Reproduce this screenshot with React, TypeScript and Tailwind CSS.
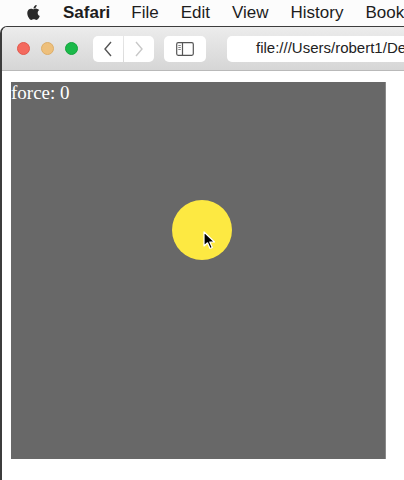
import { FaApple } from "react-icons/fa";

const menuItems = ["File", "Edit", "View", "History", "Bookmarks"];

const Light = ({ color, ring }: { color: string; ring: string }) => (
    <div className={`size-[13px] shrink-0 rounded-full border ${color} ${ring}`} />
);

const Cursor = () => (
    <svg width="13" height="20" viewBox="0 0 13 20" className="absolute left-[192px] top-[149px]">
        <path d="M1 1 L1 15 L4.5 11.8 L7 17.5 L9.3 16.5 L6.8 11 L11.5 11 Z" fill="#000" stroke="#fff" strokeWidth="1.2" strokeLinejoin="round" />
    </svg>
);

export default function App() {
    return (
        <div className="w-[404px] h-[480px] bg-white overflow-hidden flex flex-col font-['Liberation_Sans',Arial,sans-serif]">
            {/* menu bar */}
            <div className="h-[26px] shrink-0 flex items-center pl-[25px] text-[17px] text-[#1d1d1d] whitespace-nowrap bg-[#fcfcfc] overflow-hidden">
                <FaApple className="size-[17px] shrink-0 text-[#2a2a2a] -mt-[2px]" />
                <span className="ml-[21px] shrink-0 font-bold">Safari</span>
                <div className="flex shrink-0 gap-[22px] ml-[21px]">
                    {menuItems.map((m) => (
                        <span key={m} className="shrink-0">{m}</span>
                    ))}
                </div>
            </div>

            {/* window */}
            <div className="flex-1 flex flex-col border-l-2 border-t border-[#3c3c3c] rounded-tl-[7px] overflow-hidden">
                <div className="h-[44px] shrink-0 flex items-center bg-gradient-to-b from-[#ececec] to-[#d6d6d6] border-b border-[#b9b9b9] whitespace-nowrap overflow-hidden">
                    <div className="flex shrink-0 items-center gap-[11px] ml-[15px]">
                        <Light color="bg-[#f46a5e]" ring="border-[#e2584c]" />
                        <Light color="bg-[#eec07c]" ring="border-[#ddae69]" />
                        <Light color="bg-[#1bb94a]" ring="border-[#14a53d]" />
                    </div>
                    <div className="flex shrink-0 gap-px ml-[15px]">
                        <div className="w-[30px] h-[26px] rounded-l-[5px] bg-white flex items-center justify-center">
                            <svg width="10" height="16" viewBox="0 0 10 16">
                                <path d="M8 1 L2 8 L8 15" fill="none" stroke="#555" strokeWidth="1.4" />
                            </svg>
                        </div>
                        <div className="w-[30px] h-[26px] rounded-r-[5px] bg-white flex items-center justify-center">
                            <svg width="10" height="16" viewBox="0 0 10 16">
                                <path d="M2 1 L8 8 L2 15" fill="none" stroke="#c8c8c8" strokeWidth="1.4" />
                            </svg>
                        </div>
                    </div>
                    <div className="ml-[10px] shrink-0 w-[42px] h-[26px] rounded-[5px] bg-white flex items-center justify-center">
                        <svg width="18" height="14" viewBox="0 0 18 14">
                            <rect x="0.7" y="0.7" width="16.6" height="12.6" rx="1.5" fill="none" stroke="#555" strokeWidth="1.2" />
                            <line x1="6.5" y1="1" x2="6.5" y2="13" stroke="#555" strokeWidth="1.2" />
                            <line x1="2.3" y1="3.5" x2="4.8" y2="3.5" stroke="#777" strokeWidth="0.9" />
                            <line x1="2.3" y1="5.5" x2="4.8" y2="5.5" stroke="#777" strokeWidth="0.9" />
                            <line x1="2.3" y1="7.5" x2="4.8" y2="7.5" stroke="#777" strokeWidth="0.9" />
                        </svg>
                    </div>
                    <div className="ml-[21px] w-[220px] shrink-0 h-[26px] rounded-l-[5px] bg-white flex items-center pl-[29px] text-[15px] text-[#222]">
                        file:///Users/robert1/Desktop
                    </div>
                </div>

                {/* page */}
                <div className="flex-1 bg-white pl-[9px] pt-[11px]">
                    <div className="relative w-[375px] h-[377px] bg-[#686868] border-r border-[#8a8a8a]">
                        <span className="absolute left-0 top-0 text-[19px] leading-[22px] text-white font-['Liberation_Serif','Times_New_Roman',serif]">
                            force: 0
                        </span>
                        <div className="absolute left-[161px] top-[118px] size-[60px] rounded-full bg-[#fde942]" />
                        <Cursor />
                    </div>
                </div>
            </div>
        </div>
    );
}
